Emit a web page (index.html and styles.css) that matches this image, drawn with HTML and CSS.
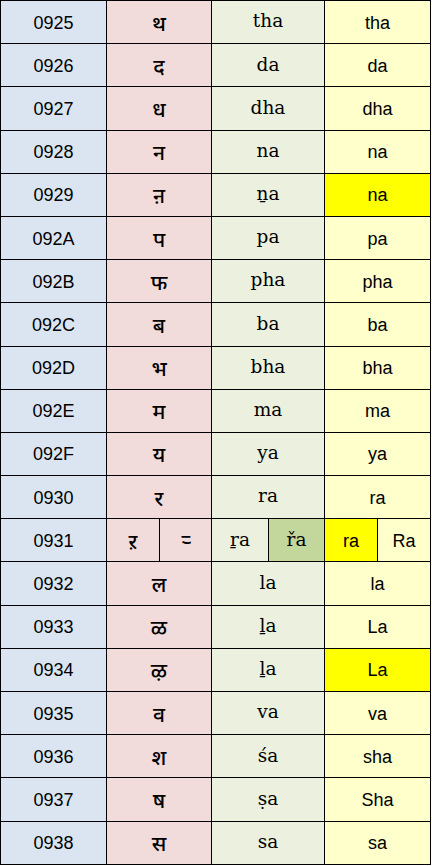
FILE: index.html
```html
<!DOCTYPE html>
<html>
<head>
<meta charset="utf-8">
<link rel="stylesheet" href="styles.css">
</head>
<body>
<div class="sheet">
  <div class="c code">0925</div><div class="c dev w2">थ</div><div class="c lat w2">tha</div><div class="c asc w2">tha</div>
  <div class="c code">0926</div><div class="c dev w2">द</div><div class="c lat w2">da</div><div class="c asc w2">da</div>
  <div class="c code">0927</div><div class="c dev w2">ध</div><div class="c lat w2">dha</div><div class="c asc w2">dha</div>
  <div class="c code">0928</div><div class="c dev w2">न</div><div class="c lat w2">na</div><div class="c asc w2">na</div>
  <div class="c code">0929</div><div class="c dev w2">ऩ</div><div class="c lat w2">ṉa</div><div class="c asc w2 hi">na</div>
  <div class="c code">092A</div><div class="c dev w2">प</div><div class="c lat w2">pa</div><div class="c asc w2">pa</div>
  <div class="c code">092B</div><div class="c dev w2">फ</div><div class="c lat w2">pha</div><div class="c asc w2">pha</div>
  <div class="c code">092C</div><div class="c dev w2">ब</div><div class="c lat w2">ba</div><div class="c asc w2">ba</div>
  <div class="c code">092D</div><div class="c dev w2">भ</div><div class="c lat w2">bha</div><div class="c asc w2">bha</div>
  <div class="c code">092E</div><div class="c dev w2">म</div><div class="c lat w2">ma</div><div class="c asc w2">ma</div>
  <div class="c code">092F</div><div class="c dev w2">य</div><div class="c lat w2">ya</div><div class="c asc w2">ya</div>
  <div class="c code">0930</div><div class="c dev w2">र</div><div class="c lat w2">ra</div><div class="c asc w2">ra</div>
  <div class="c code">0931</div><div class="c dev">ऱ</div><div class="c dev">ऱ्‍</div><div class="c lat">ṟa</div><div class="c lat dk">řa</div><div class="c asc hi">ra</div><div class="c asc">Ra</div>
  <div class="c code">0932</div><div class="c dev w2">ल</div><div class="c lat w2">la</div><div class="c asc w2">la</div>
  <div class="c code">0933</div><div class="c dev w2">ळ</div><div class="c lat w2">ḻa</div><div class="c asc w2">La</div>
  <div class="c code">0934</div><div class="c dev w2">ऴ</div><div class="c lat w2">ḻa</div><div class="c asc w2 hi">La</div>
  <div class="c code">0935</div><div class="c dev w2">व</div><div class="c lat w2">va</div><div class="c asc w2">va</div>
  <div class="c code">0936</div><div class="c dev w2">श</div><div class="c lat w2">śa</div><div class="c asc w2">sha</div>
  <div class="c code">0937</div><div class="c dev w2">ष</div><div class="c lat w2">ṣa</div><div class="c asc w2">Sha</div>
  <div class="c code">0938</div><div class="c dev w2">स</div><div class="c lat w2">sa</div><div class="c asc w2">sa</div>
</div>
</body>
</html>
```

FILE: styles.css
```css
html, body {
  margin: 0;
  padding: 0;
  background: #ffffff;
}

.sheet {
  display: grid;
  grid-template-columns: 106px 53px 52px 57px 56px 53px 53px;
  grid-template-rows: repeat(20, 43.2px);
  width: 430px;
  border-left: 1px solid #000;
  border-top: 1px solid #000;
  box-sizing: content-box;
}

.c {
  border-right: 1px solid #000;
  border-bottom: 1px solid #000;
  display: flex;
  align-items: center;
  justify-content: center;
  font-size: 18px;
  color: #000;
  line-height: 1;
  padding-top: 1px;
}

.w2 {
  grid-column: span 2;
}

.code {
  background: #dbe5f1;
  font-family: "Liberation Sans", Arial, sans-serif;
}

.dev {
  background: #f2dcdb;
  font-family: "Noto Sans Devanagari", "Lohit Devanagari", "Mangal", "FreeSans", sans-serif;
  font-size: 21px;
  font-weight: 500;
  padding-top: 8px;
}

.lat {
  background: #ebf1de;
  font-family: "DejaVu Serif", serif;
  font-size: 18.5px;
  padding-top: 0;
  padding-bottom: 1px;
}

.lat.dk {
  background: #c3d69b;
}

.asc {
  background: #ffffcc;
  font-family: "Liberation Sans", Arial, sans-serif;
}

.asc.hi {
  background: #ffff00;
}
```
